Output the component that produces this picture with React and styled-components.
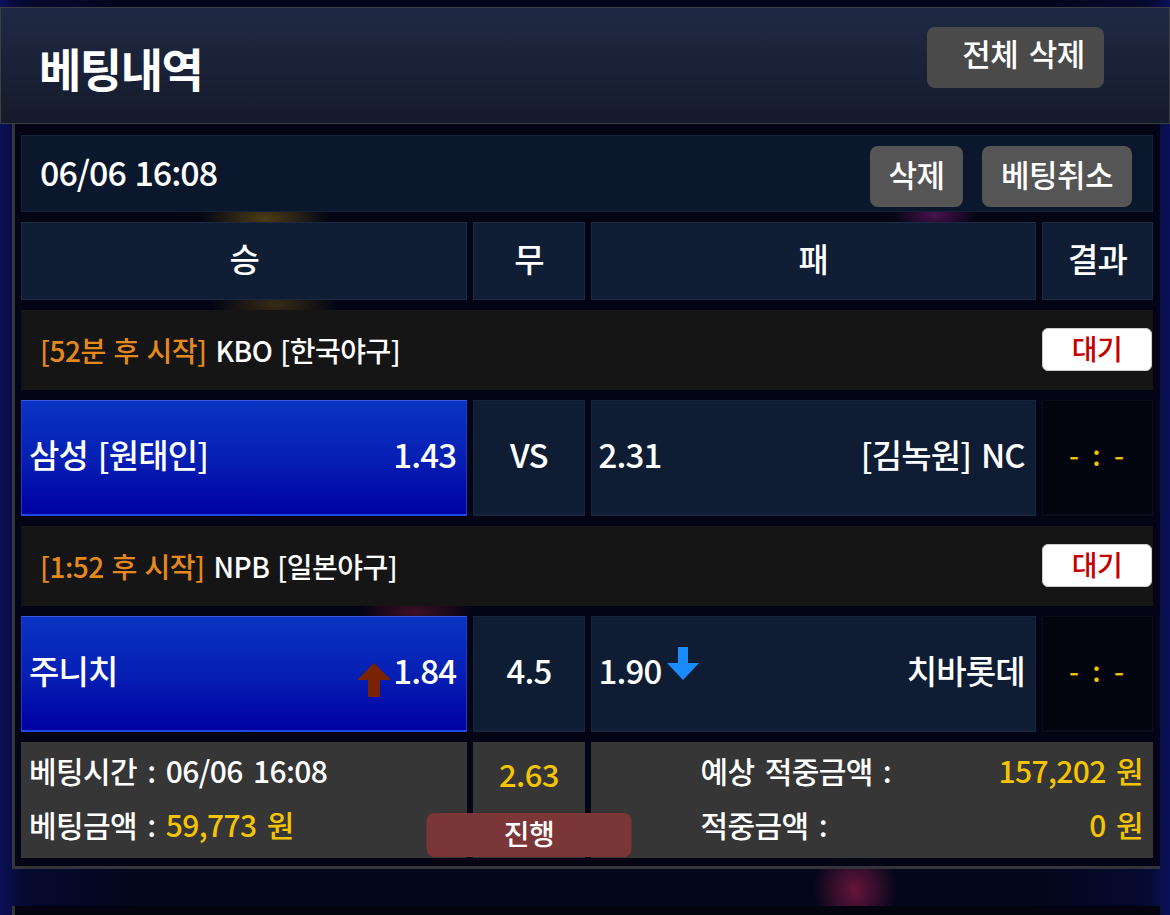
import React from "react";
import styled, { createGlobalStyle } from "styled-components";

const Global = createGlobalStyle`
  html, body { margin: 0; padding: 0; }
  body {
    background:
      radial-gradient(ellipse 60px 70px at 855px 890px, rgba(220,40,100,0.45), transparent 70%),
      radial-gradient(ellipse 140px 50px at 250px 215px, rgba(200,150,20,0.25), transparent 70%),
      radial-gradient(ellipse 100px 40px at 930px 215px, rgba(190,40,170,0.3), transparent 70%),
      linear-gradient(90deg, #0b1058 0%, #060930 2%, #04061a 12%, #04061a 88%, #060930 98%, #0b1058 100%);
    font-family: "Noto Sans CJK KR", "Noto Sans", sans-serif;
    font-weight: 500;
    color: #fff;
    width: 1170px;
    height: 915px;
    overflow: hidden;
  }
`;

const Page = styled.div`
  padding-top: 7px;
  width: 1170px;
`;

const Header = styled.header`
  height: 115px;
  border: 1px solid #3d3f46;
  background: linear-gradient(180deg, #1f2943 0%, #1a2238 50%, #151b2b 100%);
  display: flex;
  justify-content: space-between;
  align-items: flex-start;
  padding: 0 65px 0 38px;
`;

const Title = styled.h1`
  margin: 36px 0 0;
  font-size: 46px;
  line-height: 1;
  font-weight: 700;
  letter-spacing: -1.5px;
  color: #fff;
`;

const Button = styled.button`
  border: none;
  border-radius: 8px;
  background: #555;
  color: #fff;
  font-family: inherit;
  font-weight: 500;
  font-size: ${(p) => p.$size || 31}px;
  letter-spacing: -0.5px;
  word-spacing: 4px;
  height: 61px;
  width: ${(p) => p.$w}px;
  padding: 0 0 6px;
  line-height: 1;
  cursor: pointer;
`;

const HeaderButton = styled(Button)`
  margin-top: 19px;
  background: #4a4a4a;
  padding: 0 0 10px 16px;
`;

const Card = styled.section`
  margin: 0 10px 0 12px;
  border-left: 3px solid #34353b;
  border-bottom: 3px solid #34353b;
  padding: 11px 7px 8px 6px;
  background:
    radial-gradient(ellipse 90px 40px at 250px 95px, rgba(210,160,20,0.35), transparent 70%),
    radial-gradient(ellipse 90px 40px at 260px 180px, rgba(210,160,20,0.25), transparent 70%),
    radial-gradient(ellipse 60px 30px at 920px 90px, rgba(200,40,180,0.35), transparent 70%),
    radial-gradient(ellipse 80px 30px at 400px 488px, rgba(200,40,80,0.3), transparent 70%),
    rgba(3, 5, 20, 0.92);
`;

const NextCard = styled.div`
  margin: 37px 10px 0 12px;
  height: 40px;
  border-left: 3px solid #34353b;
  background: #03040f;
`;

const Board = styled.div`
  display: grid;
  grid-template-columns: 446fr 111fr 445fr 111fr;
  column-gap: 6px;
  row-gap: 10px;
`;

const DateRow = styled.div`
  grid-column: 1 / -1;
  height: 77px;
  box-sizing: border-box;
  background: #0a172c;
  border: 1px solid #14223a;
  display: flex;
  align-items: center;
  justify-content: space-between;
  padding: 0 20px 0 18px;
`;

const DateText = styled.span`
  font-size: 34px;
  letter-spacing: -1px;
  word-spacing: 2px;
  padding-bottom: 4px;
`;

const Actions = styled.div`
  display: flex;
  gap: 19px;
  align-self: flex-start;
  margin-top: 10px;
`;

const HeadCell = styled.div`
  height: 78px;
  box-sizing: border-box;
  background: #0f1e34;
  border: 1px solid #1b2a42;
  display: flex;
  align-items: center;
  justify-content: center;
  font-size: 33px;
  letter-spacing: -1px;
  padding-bottom: 6px;
`;

const LeagueRow = styled.div`
  grid-column: 1 / -1;
  height: 80px;
  background: #151515;
  display: flex;
  align-items: center;
  justify-content: space-between;
  padding: 0 1px 0 19px;
  font-size: 28px;
  letter-spacing: -0.5px;
  word-spacing: 2px;
`;

const Orange = styled.span`
  color: #e6891d;
  margin-right: 9px;
`;

const Badge = styled.span`
  width: 110px;
  height: 43px;
  margin-top: -1px;
  border-radius: 6px;
  background: #fff;
  border: 1px solid #ccc;
  box-sizing: border-box;
  color: #c40000;
  font-weight: 500;
  font-size: 28px;
  display: flex;
  align-items: center;
  justify-content: center;
  padding-bottom: 4px;
`;

const PickCell = styled.div`
  height: 116px;
  box-sizing: border-box;
  display: flex;
  align-items: center;
  justify-content: ${(p) => p.$justify || "space-between"};
  padding: 0 ${(p) => p.$padR ?? 10}px 8px ${(p) => p.$padL ?? 7}px;
  font-size: 33px;
  letter-spacing: -0.8px;
  word-spacing: 3px;
  background: ${(p) =>
    p.$picked
      ? "linear-gradient(180deg, #0a33c4 0%, #0620b4 50%, #0000a2 100%)"
      : p.$dark
      ? "#03050e"
      : "#0e1d33"};
  border-top: 1px solid ${(p) => (p.$picked ? "#3a5ae0" : p.$dark ? "#0a0d18" : "#15243c")};
  border-bottom: 2px solid ${(p) => (p.$picked ? "#2248e0" : p.$dark ? "#0a0d18" : "#15243c")};
  border-left: 1px solid ${(p) => (p.$picked ? "#1a3ad0" : p.$dark ? "#0a0d18" : "#15243c")};
  border-right: 1px solid ${(p) => (p.$picked ? "#1a3ad0" : p.$dark ? "#0a0d18" : "#15243c")};
`;

const Odds = styled.span`
  display: inline-flex;
  align-items: center;
`;

const Score = styled.span`
  color: #f2c200;
  font-size: 28px;
  letter-spacing: 2px;
`;

const SummaryCell = styled.div`
  grid-column: ${(p) => p.$span || "auto"};
  height: 116px;
  box-sizing: border-box;
  background: #363636;
  position: relative;
  display: flex;
  flex-direction: column;
  justify-content: ${(p) => (p.$center ? "flex-start" : "center")};
  align-items: ${(p) => (p.$center ? "center" : "stretch")};
  gap: 18px;
  padding: ${(p) => (p.$center ? "13px 0 0" : p.$right ? "0 10px 6px 110px" : "0 0 6px 8px")};
  font-size: 30px;
  letter-spacing: -0.6px;
  word-spacing: 4px;
`;

const Line = styled.div`
  display: flex;
  justify-content: ${(p) => (p.$spread ? "space-between" : "flex-start")};
  line-height: 36px;
  white-space: pre;
`;

const Yellow = styled.span`
  color: #f5c400;
`;

const RateText = styled.span`
  color: #f5c400;
  font-size: 31px;
  line-height: 1.2;
`;

const StatusButton = styled.span`
  position: absolute;
  left: 50%;
  top: 71px;
  transform: translateX(-50%);
  width: 205px;
  height: 44px;
  border-radius: 8px;
  background: #7b3737;
  color: #fff;
  font-weight: 500;
  font-size: 28px;
  display: flex;
  align-items: center;
  justify-content: center;
  padding-bottom: 4px;
  box-sizing: border-box;
  z-index: 1;
`;

const UpArrow = () => (
  <svg width="36" height="34" viewBox="0 0 36 34" style={{ marginTop: 20, marginRight: 1 }}>
    <path d="M18 0 L35 17 L24 17 L24 34 L12 34 L12 17 L1 17 Z" fill="#7a2204" />
  </svg>
);

const DownArrow = () => (
  <svg width="34" height="34" viewBox="0 0 34 34" style={{ marginLeft: 4, marginTop: -12 }}>
    <path d="M12 0 L22 0 L22 16 L33 16 L17 33 L1 16 L12 16 Z" fill="#1a8cff" />
  </svg>
);

export default function App() {
  return (
    <>
      <Global />
      <Page>
        <Header>
          <Title>베팅내역</Title>
          <HeaderButton $w={177}>전체 삭제</HeaderButton>
        </Header>
        <Card>
          <Board>
            <DateRow>
              <DateText>06/06 16:08</DateText>
              <Actions>
                <Button $w={93}>삭제</Button>
                <Button $w={150}>베팅취소</Button>
              </Actions>
            </DateRow>

            <HeadCell>승</HeadCell>
            <HeadCell>무</HeadCell>
            <HeadCell>패</HeadCell>
            <HeadCell>결과</HeadCell>

            <LeagueRow>
              <span>
                <Orange>[52분 후 시작]</Orange>KBO [한국야구]
              </span>
              <Badge>대기</Badge>
            </LeagueRow>

            <PickCell $picked>
              <span>삼성 [원태인]</span>
              <span>1.43</span>
            </PickCell>
            <PickCell $justify="center" $padL={0} $padR={0}>VS</PickCell>
            <PickCell>
              <span>2.31</span>
              <span>[김녹원] NC</span>
            </PickCell>
            <PickCell $dark $justify="center" $padL={0} $padR={0}>
              <Score>- : -</Score>
            </PickCell>

            <LeagueRow>
              <span>
                <Orange>[1:52 후 시작]</Orange>NPB [일본야구]
              </span>
              <Badge>대기</Badge>
            </LeagueRow>

            <PickCell $picked>
              <span>주니치</span>
              <Odds>
                <UpArrow />
                1.84
              </Odds>
            </PickCell>
            <PickCell $justify="center" $padL={0} $padR={0}>4.5</PickCell>
            <PickCell>
              <Odds>
                1.90
                <DownArrow />
              </Odds>
              <span>치바롯데</span>
            </PickCell>
            <PickCell $dark $justify="center" $padL={0} $padR={0}>
              <Score>- : -</Score>
            </PickCell>

            <SummaryCell>
              <Line>베팅시간 : 06/06 16:08</Line>
              <Line>
                베팅금액 :<Yellow> 59,773 원</Yellow>
              </Line>
            </SummaryCell>
            <SummaryCell $center>
              <RateText>2.63</RateText>
              <StatusButton>진행</StatusButton>
            </SummaryCell>
            <SummaryCell $span="3 / 5" $right>
              <Line $spread>
                <span>예상 적중금액 :</span>
                <Yellow>157,202 원</Yellow>
              </Line>
              <Line $spread>
                <span>적중금액 :</span>
                <Yellow>0 원</Yellow>
              </Line>
            </SummaryCell>
          </Board>
        </Card>
        <NextCard />
      </Page>
    </>
  );
}
